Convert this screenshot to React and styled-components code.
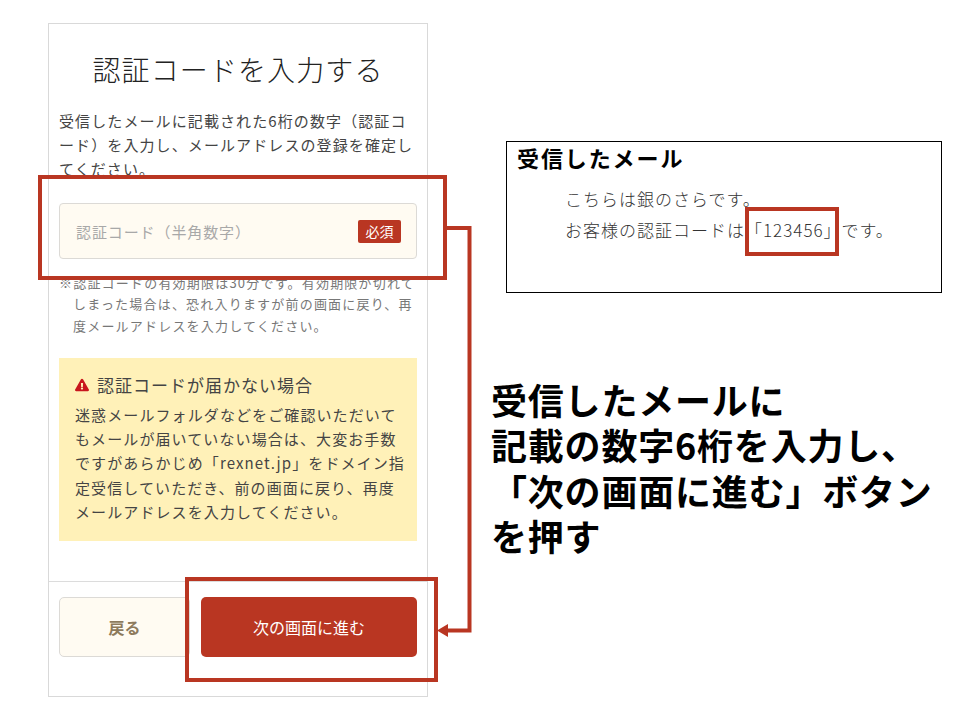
import React from 'react'
import styled, { createGlobalStyle } from 'styled-components'
import { FaExclamationTriangle } from 'react-icons/fa'

const RED = '#b93622'

const GlobalStyle = createGlobalStyle`
  html, body {
    margin: 0;
    padding: 0;
    background: #fff;
  }
  body {
    font-family: "Noto Sans CJK JP", "Noto Sans", sans-serif;
  }
`

const Slide = styled.div`
  position: relative;
  width: 960px;
  height: 720px;
  overflow: hidden;
  background: #fff;
  display: flex;
  align-items: flex-start;
  padding: 23px 0 0 48px;
  box-sizing: border-box;
`

const Phone = styled.section`
  width: 380px;
  height: 674px;
  box-sizing: border-box;
  border: 1px solid #d9d9d9;
  display: flex;
  flex-direction: column;
  flex-shrink: 0;
`

const Content = styled.div`
  flex: 1;
  padding: 0 10px;
`

const Title = styled.h1`
  margin: 25px 0 0;
  text-align: center;
  font-size: 28px;
  line-height: 40px;
  font-weight: 300;
  letter-spacing: 1.1px;
  color: #222;
`

const Lead = styled.p`
  margin: 20px 0 0;
  font-size: 15px;
  line-height: 24px;
  letter-spacing: 1.1px;
  color: #444;
  white-space: nowrap;
`

const CodeField = styled.div`
  margin-top: 22px;
  height: 56px;
  box-sizing: border-box;
  padding: 0 15px 0 16px;
  display: flex;
  align-items: center;
  justify-content: space-between;
  background: #fffbf2;
  border: 1px solid #dcdad6;
  border-radius: 4px;
`

const Placeholder = styled.span`
  font-size: 15px;
  letter-spacing: 0.9px;
  color: #a8a8a8;
`

const Badge = styled.span`
  width: 43px;
  height: 23px;
  display: flex;
  align-items: center;
  justify-content: center;
  background: ${RED};
  border-radius: 2px;
  color: #fff;
  font-size: 14px;
`

const Note = styled.p`
  margin: 13px 0 0;
  padding-left: 14px;
  text-indent: -14px;
  font-size: 13px;
  line-height: 21.3px;
  letter-spacing: 1.2px;
  color: #777;
  white-space: nowrap;
`

const Notice = styled.div`
  margin-top: 22px;
  height: 183px;
  box-sizing: border-box;
  padding: 15px 16px 0;
  background: #fff1b8;
`

const NoticeTitle = styled.h2`
  margin: 0;
  display: flex;
  align-items: center;
  gap: 8px;
  font-size: 17px;
  line-height: 24px;
  font-weight: 400;
  letter-spacing: 1px;
  color: #444;
  svg {
    color: #c8161d;
    font-size: 14px;
  }
`

const NoticeBody = styled.p`
  margin: 6px 0 0;
  font-size: 15px;
  line-height: 24.3px;
  letter-spacing: 1.1px;
  color: #444;
  white-space: nowrap;
`

const Footer = styled.div`
  height: 115px;
  box-sizing: border-box;
  border-top: 1px solid #dcdcdc;
  padding: 15px 10px 0;
  display: flex;
  align-items: flex-start;
  gap: 11px;
`

const Button = styled.div`
  height: 60px;
  width: ${(p) => (p.$primary ? '216px' : '131px')};
  box-sizing: border-box;
  display: flex;
  align-items: center;
  justify-content: center;
  border-radius: 5px;
  font-size: 16px;
  font-weight: ${(p) => (p.$primary ? 400 : 700)};
  background: ${(p) => (p.$primary ? RED : '#fffbf2')};
  color: ${(p) => (p.$primary ? '#fff' : '#8d7a5c')};
  border: ${(p) => (p.$primary ? 'none' : '1px solid #dcdad6')};
`

const Side = styled.aside`
  display: flex;
  flex-direction: column;
  margin-left: 63px;
`

const MailBox = styled.div`
  margin: 118px 0 0 15px;
  width: 436px;
  height: 152px;
  box-sizing: border-box;
  border: 1px solid #000;
  padding: 0 10px;
`

const MailTitle = styled.h2`
  margin: 0;
  font-size: 22px;
  line-height: 30px;
  font-weight: 700;
  letter-spacing: 1.9px;
  color: #000;
`

const MailLines = styled.div`
  margin-top: 12px;
  padding-left: 48px;
  font-size: 17px;
  line-height: 30.5px;
  font-weight: 300;
  letter-spacing: 1px;
  color: #333;
  white-space: nowrap;
`

const Instruction = styled.p`
  margin: 84px 0 0;
  font-size: 36px;
  line-height: 45.3px;
  font-weight: 700;
  letter-spacing: 0.8px;
  color: #000;
  white-space: nowrap;
`

// red marks drawn over the screenshot
const Highlight = styled.div`
  position: absolute;
  left: ${(p) => p.$x}px;
  top: ${(p) => p.$y}px;
  width: ${(p) => p.$w}px;
  height: ${(p) => p.$h}px;
  box-sizing: border-box;
  border: 4px solid ${RED};
`

const Connector = styled.svg`
  position: absolute;
  left: 430px;
  top: 220px;
`

export default function App() {
  return (
    <>
      <GlobalStyle />
      <Slide>
        <Phone>
          <Content>
            <Title>認証コードを入力する</Title>
            <Lead>
              受信したメールに記載された6桁の数字（認証コ<br />
              ード）を入力し、メールアドレスの登録を確定し<br />
              てください。
            </Lead>
            <CodeField>
              <Placeholder>認証コード（半角数字）</Placeholder>
              <Badge>必須</Badge>
            </CodeField>
            <Note>
              ※認証コードの有効期限は30分です。有効期限が切れて<br />
              しまった場合は、恐れ入りますが前の画面に戻り、再<br />
              度メールアドレスを入力してください。
            </Note>
            <Notice>
              <NoticeTitle>
                <FaExclamationTriangle />
                認証コードが届かない場合
              </NoticeTitle>
              <NoticeBody>
                迷惑メールフォルダなどをご確認いただいて<br />
                もメールが届いていない場合は、大変お手数<br />
                ですがあらかじめ「rexnet.jp」をドメイン指<br />
                定受信していただき、前の画面に戻り、再度<br />
                メールアドレスを入力してください。
              </NoticeBody>
            </Notice>
          </Content>
          <Footer>
            <Button>戻る</Button>
            <Button $primary>次の画面に進む</Button>
          </Footer>
        </Phone>
        <Side>
          <MailBox>
            <MailTitle>受信したメール</MailTitle>
            <MailLines>
              こちらは銀のさらです。<br />
              お客様の認証コードは「123456」です。
            </MailLines>
          </MailBox>
          <Instruction>
            受信したメールに<br />
            記載の数字6桁を入力し、<br />
            「次の画面に進む」ボタン<br />
            を押す
          </Instruction>
        </Side>

        <Highlight $x={38} $y={175} $w={409} $h={105} />
        <Highlight $x={185} $y={577} $w={253} $h={105} />
        <Highlight $x={745} $y={207} $w={94} $h={49} />
        <Connector width="50" height="420" viewBox="0 0 50 420">
          <path d="M17 8 H39.5 V410.5 H14" fill="none" stroke={RED} strokeWidth="4" />
          <path d="M7 410.5 L18 404 V417 Z" fill={RED} />
        </Connector>
      </Slide>
    </>
  )
}
